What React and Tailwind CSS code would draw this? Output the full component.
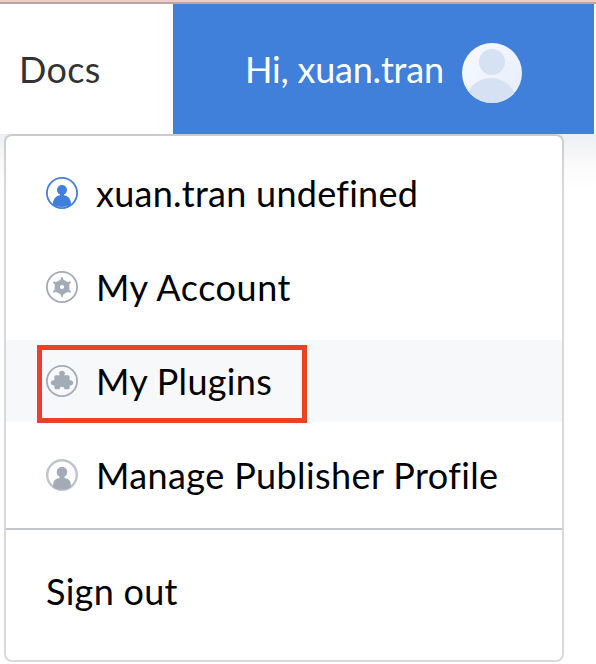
import React from "react";

function PersonIcon({ muted }) {
  return muted ? (
    <svg className="size-8 shrink-0 text-[#a3abb7]" viewBox="0 0 32 32" fill="none">
      <circle cx="16" cy="16" r="14.8" stroke="currentColor" strokeWidth="2.4" strokeOpacity=".7" />
      <circle cx="16" cy="13" r="5.3" fill="currentColor" />
      <path d="M7.2 28.2V25.5C7.2 21.5 10 19.2 13.3 19.2L14 17h4l.7 2.2c3.3 0 6.1 2.3 6.1 6.3v2.7C22 31.4 10 31.4 7.2 28.2Z" fill="currentColor" />
    </svg>
  ) : (
    <svg className="size-8 shrink-0 text-[#4180da]" viewBox="0 0 32 32" fill="none">
      <circle cx="16" cy="16" r="15.1" stroke="currentColor" strokeWidth="1.8" />
      <circle cx="16" cy="13" r="5" fill="currentColor" />
      <path d="M6.8 28C6.8 22 10 18.6 14 18.2V17h4v1.2C22 18.6 25.2 22 25.2 28C20 30.6 12 30.6 6.8 28Z" fill="currentColor" />
    </svg>
  );
}

function GearIcon() {
  return (
    <svg className="size-8 shrink-0 text-[#a3abb7]" viewBox="0 0 32 32" fill="none">
      <circle cx="16" cy="16" r="15.1" stroke="currentColor" strokeWidth="1.8" />
      <path
        fillRule="evenodd"
        d="M16 7.4 19.2 9.7 23.4 11.7 23.3 16 23.4 20.3 19.2 22.3 16 24.6 12.8 22.3 8.6 20.3 8.7 16 8.6 11.7 12.8 9.7ZM16 13.9a2.1 2.1 0 1 0 0 4.2 2.1 2.1 0 0 0 0-4.2Z"
        fill="currentColor"
      />
      <path
        d="M16 7v2.5M16 22.5V25M23.9 11.4l-1.6 1M9.7 19.6l-1.6 1M8.1 11.4l1.6 1M22.3 19.6l1.6 1"
        stroke="currentColor"
        strokeWidth="2"
        strokeLinecap="round"
      />
    </svg>
  );
}

function PuzzleIcon() {
  return (
    <svg className="size-8 shrink-0 text-[#a3abb7]" viewBox="0 0 32 32" fill="none">
      <circle cx="16" cy="16" r="15.1" stroke="currentColor" strokeWidth="1.8" />
      <path
        d="M9.9 10.2h4c-.5-.6-.8-1-.8-1.6a2.9 2.9 0 0 1 5.8 0c0 .6-.3 1-.8 1.6h4q1.5 0 1.5 1.5v3.5c2-.3 3.6.8 3.6 2.6s-1.6 2.9-3.6 2.6v2.3q0 1.5-1.5 1.5h-3.7c0-1.6-.9-2.4-2.4-2.4s-2.4.8-2.4 2.4H9.9q-1.5 0-1.5-1.5v-2.3c-2 .3-3.6-.8-3.6-2.6s1.6-2.9 3.6-2.6v-3.5q0-1.5 1.5-1.5Z"
        fill="currentColor"
      />
    </svg>
  );
}

function Avatar() {
  return (
    <svg className="size-[60px] shrink-0" viewBox="0 0 60 60">
      <defs>
        <linearGradient id="avatarFill" x1="0" y1="0" x2="1" y2="1">
          <stop offset="0.2" stopColor="#f5f7fc" />
          <stop offset="0.8" stopColor="#e8f0fd" />
        </linearGradient>
        <clipPath id="avatarClip">
          <circle cx="30" cy="30" r="30" />
        </clipPath>
      </defs>
      <g clipPath="url(#avatarClip)">
        <rect width="60" height="60" fill="url(#avatarFill)" />
        <circle cx="30" cy="19" r="13" fill="#d6e1f3" />
        <circle cx="29" cy="61" r="26" fill="#d6e1f3" />
      </g>
    </svg>
  );
}

function Row({ icon, children, active }) {
  return (
    <div className={`flex h-[82px] items-center gap-[18px] pl-10 ${active ? "bg-[#f7f8fa]" : ""}`}>
      {icon}
      {children}
    </div>
  );
}

export default function App() {
  return (
    <div className="h-[664px] w-[596px] overflow-hidden whitespace-nowrap bg-white font-['Lato',sans-serif] text-[36px] leading-[44px] text-black">
      <div className="h-1 border-b-2 border-[#bda6a2] bg-[#edcdc6]" />
      <header className="flex h-[130px] w-[594px]">
        <div className="flex w-[173px] items-center pl-[19px] text-[#333]">
          <span className="tracking-[0.3px]">Docs</span>
        </div>
        <div className="flex flex-1 items-center bg-[#4180da] pl-[72px] text-white">
          <span className="w-[217px] tracking-[-0.2px]">Hi, xuan.tran</span>
          <div className="pt-2">
            <Avatar />
          </div>
        </div>
      </header>
      <div className="h-[530px] bg-linear-to-b from-[#eceef1] via-[#fafafb] via-[28px] to-white to-[56px] pl-1">
        <nav className="h-[528px] w-[560px] rounded-lg border-2 border-black/15 bg-white bg-clip-padding">
          <div className="relative flex flex-col gap-3 border-b-2 border-[#c3c7cd] pt-4 pb-3">
            <Row icon={<PersonIcon />}>
              <span className="tracking-[0.27px]">xuan.tran undefined</span>
            </Row>
            <Row icon={<GearIcon />}>
              <span className="tracking-[0.55px]">My Account</span>
            </Row>
            <Row icon={<PuzzleIcon />} active>
              <span className="tracking-[0.3px]">My Plugins</span>
            </Row>
            <Row icon={<PersonIcon muted />}>
              <span className="tracking-[0.4px]">Manage Publisher Profile</span>
            </Row>
            <div className="absolute top-[209px] left-[31px] h-[78px] w-[270px] border-5 border-[#ec4027]" />
          </div>
          <div className="flex h-[126px] items-center pb-1 pl-10">
            <span className="tracking-[0.3px]">Sign out</span>
          </div>
        </nav>
      </div>
    </div>
  );
}
